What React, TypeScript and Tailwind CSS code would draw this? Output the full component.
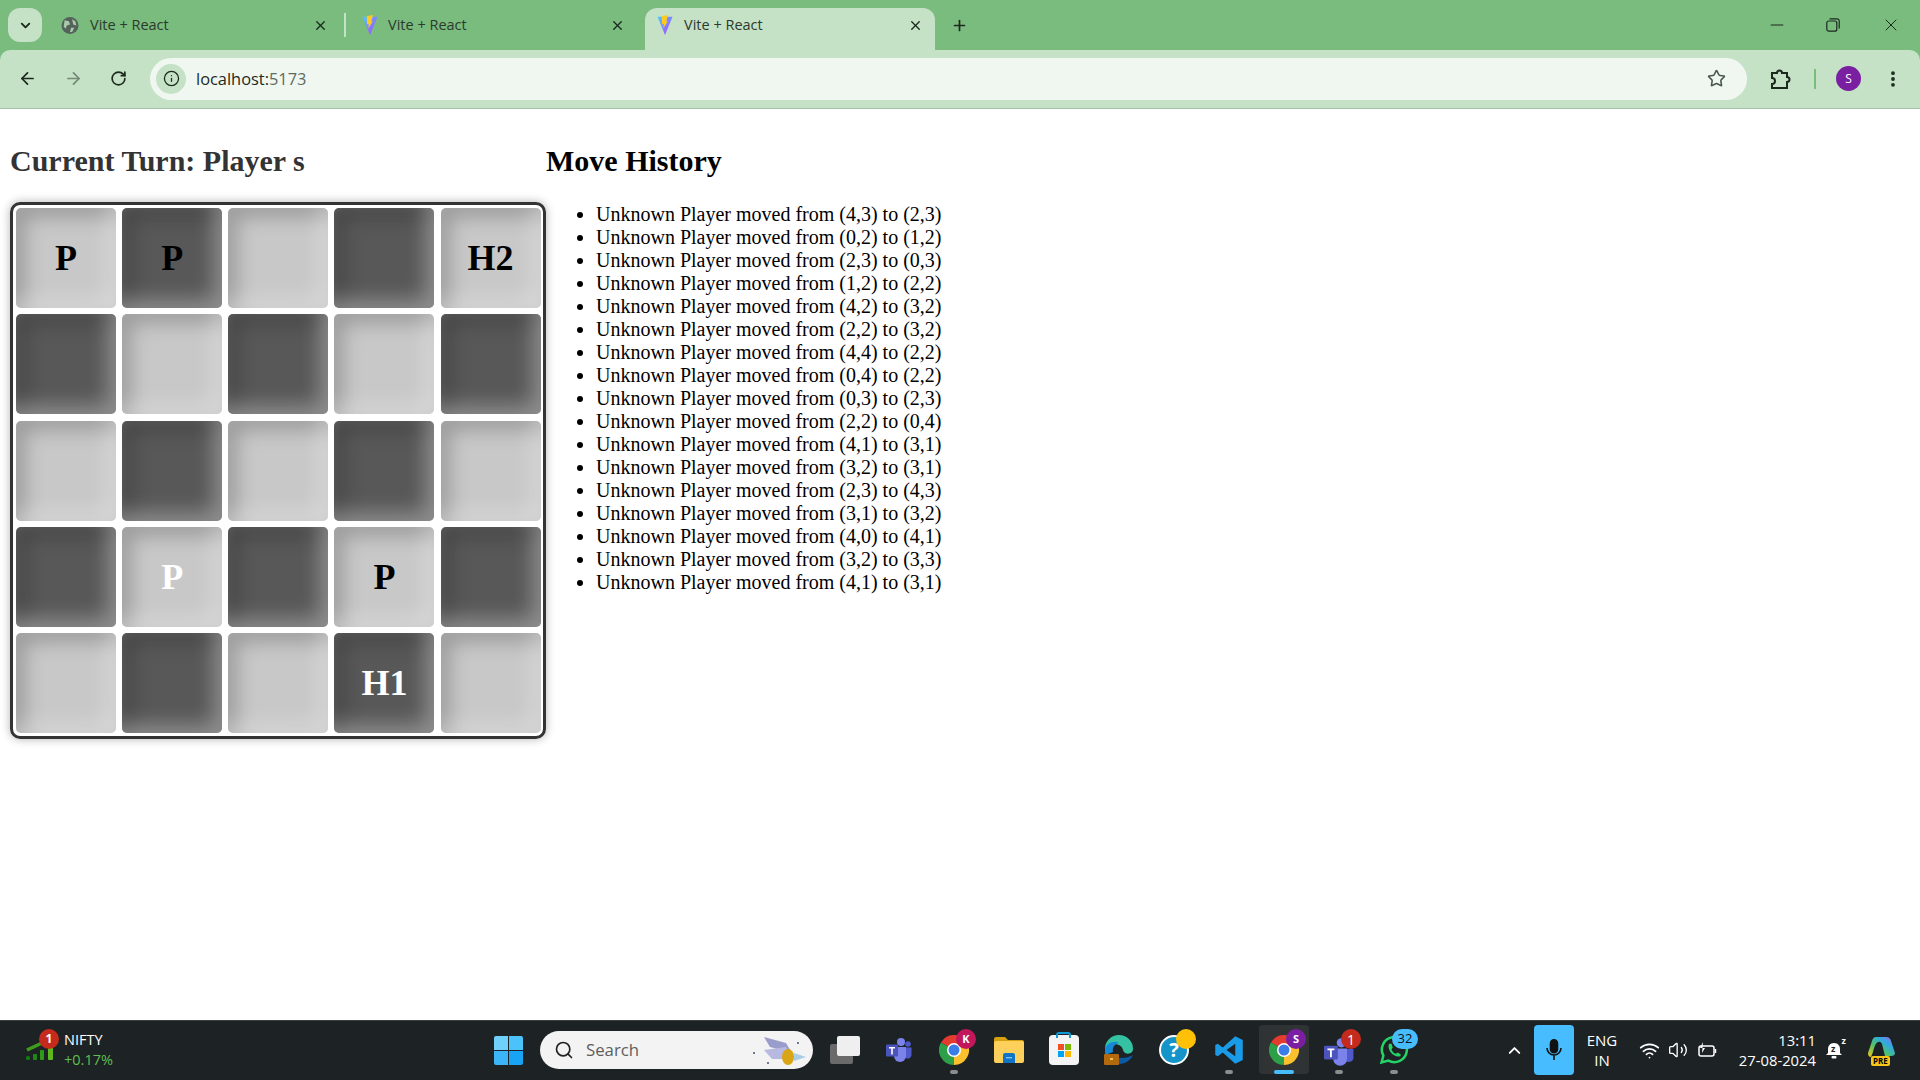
import React from "react";
import {
  ArrowLeft,
  ArrowRight,
  ChevronDown,
  ChevronUp,
  EllipsisVertical,
  Info,
  Minus,
  Plus,
  RotateCw,
  Search,
  Star,
  Volume2,
  Wifi,
  X,
} from "lucide-react";

const board = [
  ["P", "P", "", "", "H2"],
  ["", "", "", "", ""],
  ["", "", "", "", ""],
  ["", "P", "", "P", ""],
  ["", "", "", "H1", ""],
];

const whitePieces = ["3-1", "4-3"];

const moves = [
  "(4,3) to (2,3)",
  "(0,2) to (1,2)",
  "(2,3) to (0,3)",
  "(1,2) to (2,2)",
  "(4,2) to (3,2)",
  "(2,2) to (3,2)",
  "(4,4) to (2,2)",
  "(0,4) to (2,2)",
  "(0,3) to (2,3)",
  "(2,2) to (0,4)",
  "(4,1) to (3,1)",
  "(3,2) to (3,1)",
  "(2,3) to (4,3)",
  "(3,1) to (3,2)",
  "(4,0) to (4,1)",
  "(3,2) to (3,3)",
  "(4,1) to (3,1)",
];

const ViteIcon = ({ id }: { id: string }) => (
  <svg width="20" height="20" viewBox="0 0 24 24" className="shrink-0">
    <defs>
      <linearGradient id={id} x1="0" y1="0" x2="1" y2="1">
        <stop offset="0" stopColor="#41d1ff" />
        <stop offset="1" stopColor="#bd34fe" />
      </linearGradient>
    </defs>
    <path d="M3 2 L21 2 L12 24 Z" fill={`url(#${id})`} />
    <path d="M15.5 0 L8 1.5 L8.5 11 L10.5 10.5 L10 16 L15.5 7.5 L13.5 8 Z" fill="#ffc91f" />
  </svg>
);

const ChromeIcon = () => (
  <svg width="30" height="30" viewBox="0 0 24 24">
    <path d="M12 12 L1.6 6 A12 12 0 0 1 22.4 6 Z" fill="#e33b2e" />
    <path d="M12 12 L1.6 6 A12 12 0 0 0 12 24 Z" fill="#2d9f48" />
    <path d="M12 12 L22.4 6 A12 12 0 0 1 12 24 Z" fill="#fbc02d" />
    <circle cx="12" cy="12" r="5.6" fill="#fff" />
    <circle cx="12" cy="12" r="4.4" fill="#3b7de8" />
  </svg>
);

const TeamsIcon = ({ size = 26 }: { size?: number }) => (
  <svg width={size} height={size} viewBox="0 0 26 24">
    <circle cx="15" cy="4" r="4" fill="#7b83eb" />
    <circle cx="22" cy="6" r="2.8" fill="#5059c9" />
    <path d="M18 9.5 h7.5 v7 a4 4 0 0 1 -7.5 2 Z" fill="#5059c9" />
    <path d="M8 9 h12 v9 a6 6 0 0 1 -12 0 Z" fill="#7b83eb" />
    <rect x="0" y="6.5" width="12" height="12" rx="1" fill="#4b53bc" />
    <path d="M3 9 h6 v1.5 h-2.2 v6 h-1.6 v-6 h-2.2 Z" fill="#fff" />
  </svg>
);

const Badge = ({ label, className }: { label: string; className: string }) => (
  <span
    className={`absolute flex items-center justify-center rounded-full text-white font-['Open_Sans',sans-serif] ${className}`}
  >
    {label}
  </span>
);

const Dot = () => <span className="absolute bottom-[-9px] left-1/2 -translate-x-1/2 w-2 h-[4px] rounded-full bg-[#8b8d8d]" />;

const Tab = ({ icon, gap }: { icon: React.ReactNode; gap: string }) => (
  <div className="flex h-[34px] w-full items-center">
    {icon}
    <span className={`text-[14.5px] text-[#2c3a2d] ${gap}`}>Vite + React</span>
    <X size={15} strokeWidth={2.2} className="ml-auto text-[#1c2a1d]" />
  </div>
);

const Chrome = () => (
  <div className="bg-[#7abb7e] font-['Open_Sans',sans-serif]">
    <div className="flex h-[50px] pt-2">
      <div className="ml-2 flex h-[34px] w-[34px] shrink-0 items-center justify-center rounded-[12px] bg-[#c5e1c6]">
        <ChevronDown size={15} strokeWidth={3} className="text-[#1c2a1d]" />
      </div>
      <div className="ml-[19px] w-[267px] shrink-0">
        <Tab
          gap="ml-[11px]"
          icon={
            <svg width="18" height="17" viewBox="0 0 16 16" className="shrink-0 text-[#54635a]">
              <circle cx="8" cy="8" r="8" fill="currentColor" />
              <path d="M3 3 l4 1 l1 3 l-3 1 l-1 3 l-2 -2 Z M10 2 l3 2 l1 4 l-3 -1 Z M9 10 l3 0 l-2 4 l-2 0 Z" fill="#a9c9ab" />
            </svg>
          }
        />
      </div>
      <div className="ml-[16px] mt-[5px] h-[24px] w-[2px] shrink-0 bg-[#c5e1c6]" />
      <div className="ml-[14px] w-[265px] shrink-0">
        <Tab gap="ml-[8px]" icon={<ViteIcon id="vite-a" />} />
      </div>
      <div className="ml-[20px] h-[42px] w-[290px] shrink-0 rounded-t-[12px] bg-[#c5e1c6] pl-[10px] pr-[12px]">
        <Tab gap="ml-[9px]" icon={<ViteIcon id="vite-b" />} />
      </div>
      <div className="ml-[16px] flex h-[34px] items-center">
        <Plus size={17} strokeWidth={2.4} className="text-[#1c2a1d]" />
      </div>
      <div className="ml-auto flex h-[34px] items-center pr-[19px] text-[#1c2a1d]">
        <Minus size={20} strokeWidth={1.3} />
        <svg width="14" height="14" viewBox="0 0 14 14" fill="none" stroke="currentColor" strokeWidth="1.2" className="ml-[39px]">
          <rect x="0.8" y="3" width="10" height="10.2" rx="2" />
          <path d="M3.5 0.8 h7.5 a2.2 2.2 0 0 1 2.2 2.2 v7.5" />
        </svg>
        <X size={20} strokeWidth={1.2} className="ml-[41px]" />
      </div>
    </div>
    <div className="flex h-[59px] items-center rounded-t-[10px] border-b border-[#a7c3a9] bg-[#c5e1c6] pb-[1px]">
      <div className="flex w-[150px] items-center gap-[27px] pl-[18px]">
        <ArrowLeft size={19} strokeWidth={2.2} className="text-[#1c2a1d]" />
        <ArrowRight size={19} strokeWidth={2.2} className="text-[#738a75]" />
        <RotateCw size={17} strokeWidth={2.4} className="text-[#1c2a1d]" />
      </div>
      <div className="flex h-[42px] w-[1597px] items-center rounded-full bg-[#f0f7f1] pl-[6px] pr-[21px]">
        <div className="flex h-[30px] w-[30px] items-center justify-center rounded-full bg-[#c5e1c6]">
          <Info size={17} strokeWidth={1.8} className="text-[#1c2a1d]" />
        </div>
        <span className="ml-[10px] mt-[2px] text-[16.4px] text-[#1c2a1d]">
          localhost:<span className="text-[#5c6a5d]">5173</span>
        </span>
        <Star size={19} strokeWidth={2} className="ml-auto text-[#4b574c]" />
      </div>
      <svg width="22" height="22" viewBox="0 0 22 22" fill="none" stroke="#1c2a1d" strokeWidth="2" className="ml-[23px]">
        <path d="M2 5 h5 a2.5 2.5 0 0 1 5 0 h5 v4 a2.5 2.5 0 0 1 0 5 v6 H2 v-4 a3 3 0 0 0 0 -6 Z" />
      </svg>
      <div className="ml-[22px] h-[20px] w-[2px] bg-[#7abb7e]" />
      <div className="ml-[20px] flex h-[25px] w-[25px] items-center justify-center rounded-full bg-[#7b1fa2] text-[12px] text-white">
        S
      </div>
      <EllipsisVertical size={20} strokeWidth={2.6} className="ml-[22px] text-[#1c2a1d]" />
    </div>
  </div>
);

const Board = () => (
  <div className="grid w-[536px] grid-cols-[repeat(5,100px)] gap-x-[6.15px] gap-y-[6.25px] rounded-[10px] border-[3px] border-[#333] py-[3px] pl-[3px] pr-[2px] shadow-[0_0_10px_rgba(0,0,0,0.3)]">
    {board.map((row, r) =>
      row.map((piece, c) => {
        const dark = (r + c) % 2 === 1;
        const white = whitePieces.includes(`${r}-${c}`);
        return (
          <div
            key={`${r}-${c}`}
            className={`flex h-[100px] w-[100px] items-center justify-center rounded-[5px] text-[36px] font-bold shadow-[inset_-8px_-8px_20px_rgba(255,255,255,0.35),inset_8px_8px_20px_rgba(0,0,0,0.25)] ${
              dark ? "bg-[#585858]" : "bg-[#c8c8c8]"
            } ${white ? "text-white" : "text-black"}`}
          >
            {piece}
          </div>
        );
      }),
    )}
  </div>
);

const Taskbar = () => (
  <div className="flex h-[60px] items-center border-t border-[#3a3d3d] bg-[#1d2224] pb-[1px] font-['Open_Sans',sans-serif] text-white">
    <div className="relative flex h-full w-[476px] shrink-0 items-center pl-[64px]">
      <svg width="30" height="24" viewBox="0 0 30 24" className="absolute left-[25px] top-[16px]">
        <path d="M2 13 L17 6" stroke="#3f9d1e" strokeWidth="3.5" fill="none" />
        <rect x="1" y="19" width="4" height="4" rx="1.5" fill="#107c10" />
        <rect x="8" y="17" width="4" height="6" rx="1" fill="#1c8a14" />
        <rect x="15" y="13" width="4" height="10" rx="1" fill="#2d9a18" />
        <rect x="23" y="7" width="5" height="16" rx="1" fill="#5cb81e" />
      </svg>
      <Badge label="1" className="left-[39px] top-[8px] h-[20px] w-[20px] bg-[#c42b1c] text-[12px] font-bold" />
      <div className="text-[14.5px] leading-[20px]">
        <div>NIFTY</div>
        <div className="text-[#5fbf4f]">+0.17%</div>
      </div>
    </div>
    <div className="flex w-[64px] shrink-0 justify-center">
      <div className="grid h-[29px] w-[29px] grid-cols-2 gap-[1px]">
        <span className="rounded-tl-[2px] bg-[#6fd1fb]" />
        <span className="rounded-tr-[2px] bg-[#4cc2fa]" />
        <span className="rounded-bl-[2px] bg-[#3bb4f8]" />
        <span className="rounded-br-[2px] bg-[#19a3f5]" />
      </div>
    </div>
    <div className="relative flex h-[38px] w-[273px] shrink-0 items-center rounded-full bg-[#f3f3f3] pl-[14px] text-[#5e5e5e]">
      <Search size={20} strokeWidth={2} className="text-[#222]" />
      <span className="ml-[12px] text-[16.8px]">Search</span>
      <svg width="56" height="34" viewBox="0 0 56 34" className="absolute right-[5px] top-[2px]">
        <path d="M12 4 L34 10 L40 20 L18 14 Z" fill="#9a9ccc" />
        <path d="M12 17 L34 14 L42 26 L20 26 Z" fill="#b7b9e0" />
        <ellipse cx="36" cy="24" rx="6" ry="8" fill="#d9a514" />
        <path d="M42 20 L54 24 L42 28 Z" fill="#a9cde6" />
        <circle cx="2" cy="20" r="1" fill="#44506a" />
        <circle cx="46" cy="10" r="1" fill="#44506a" />
        <circle cx="16" cy="30" r="1" fill="#44506a" />
      </svg>
    </div>
    <div className="ml-[17px] flex items-center gap-[25px]">
      <div className="relative h-[28px] w-[30px]">
        <span className="absolute bottom-0 left-0 h-[20px] w-[23px] rounded-[2px] bg-[#6a6a6a]" />
        <span className="absolute right-0 top-0 h-[20px] w-[23px] rounded-[2px] bg-[#efefef]" />
      </div>
      <div className="relative ml-[1px]">
        <TeamsIcon />
      </div>
      <div className="relative ml-[2px] h-[30px] w-[30px]">
        <ChromeIcon />
        <Badge label="K" className="right-[-7px] top-[-6px] h-[20px] w-[20px] bg-[#c2185b] text-[11px] font-bold" />
        <Dot />
      </div>
      <svg width="30" height="28" viewBox="0 0 30 28">
        <path d="M0 3 a2 2 0 0 1 2 -2 h9 l3 3 h14 a2 2 0 0 1 2 2 v4 H0 Z" fill="#d6a10f" />
        <rect x="0" y="5" width="30" height="22" rx="2" fill="#fcd05a" />
        <path d="M9 19 a2 2 0 0 1 2 -2 h8 a2 2 0 0 1 2 2 v8 H9 Z" fill="#0f74c8" />
        <rect x="12" y="21" width="6" height="1.4" fill="#7cc4f5" />
      </svg>
      <div className="relative flex h-[30px] w-[30px] items-center justify-center rounded-[4px] bg-[#f4f4f4]">
        <span className="absolute left-[7px] top-[-3px] h-[6px] w-[15px] rounded-t-[3px] border-2 border-b-0 border-[#0f9bd7]" />
        <div className="grid h-[13px] w-[13px] grid-cols-2 gap-[1px]">
          <span className="bg-[#f25022]" />
          <span className="bg-[#7fba00]" />
          <span className="bg-[#00a4ef]" />
          <span className="bg-[#ffb900]" />
        </div>
      </div>
      <svg width="30" height="30" viewBox="0 0 30 30">
        <path d="M1 14 A14 14 0 0 1 29 14 C29 20 20 20 19 15 C18 10 12 8 8 10 C4 12 3 14 1 17 Z" fill="#35c2a3" />
        <path d="M1 14 C3 8 10 5 15 8 C10 9 8 13 9 17 L1 20 Z" fill="#1787d8" />
        <path d="M10 20 C14 24 22 24 29 20 C26 27 18 30 12 29 Z" fill="#0c59a4" />
        <rect x="0" y="19" width="15" height="11" rx="1" fill="#b4690e" />
        <rect x="6" y="23" width="3" height="2" fill="#f3c24a" />
      </svg>
      <div className="relative h-[30px] w-[30px]">
        <div className="flex h-[30px] w-[30px] items-center justify-center rounded-full border-2 border-white bg-[#1594c9] text-[20px] font-bold">?</div>
        <span className="absolute right-[-7px] top-[-6px] h-[20px] w-[20px] rounded-full bg-[#ffc107]" />
      </div>
      <div className="relative">
        <svg width="30" height="30" viewBox="0 0 24 24" className="block">
          <path d="M17 1 L23 4 V20 L17 23 L7 14 L3 17 L1 16 V8 L3 7 L7 10 Z M17 7 L10 12 L17 17 Z" fill="#1a9be8" fillRule="evenodd" />
        </svg>
        <Dot />
      </div>
      <div className="relative">
        <div className="absolute left-[-10px] top-[-10px] h-[49px] w-[50px] rounded-[4px] bg-[#2f3334]" />
        <div className="relative h-[30px] w-[30px]">
          <ChromeIcon />
          <Badge label="S" className="right-[-7px] top-[-6px] h-[20px] w-[20px] bg-[#7b1fa2] text-[11px] font-bold" />
        </div>
        <span className="absolute bottom-[-9px] left-1/2 h-[4px] w-[20px] -translate-x-1/2 rounded-full bg-[#47bdff]" />
      </div>
      <div className="relative h-[30px] w-[30px] pt-[2px]">
        <TeamsIcon size={30} />
        <Badge label="1" className="right-[-7px] top-[-6px] h-[20px] w-[20px] bg-[#c42b1c] text-[14px]" />
        <Dot />
      </div>
      <div className="relative h-[30px] w-[30px]">
        <svg width="30" height="30" viewBox="0 0 24 24" fill="none">
          <path d="M2 22 L3.5 16.5 A10 10 0 1 1 7.5 20.5 Z" stroke="#25d366" strokeWidth="2" />
          <path d="M8 7 L10 7 L11 10 L10 11.5 C11 13.5 12 14.5 13.5 15 L15 14 L17.5 15.5 L17 17 C12 18.5 6 12 8 7 Z" fill="#25d366" />
        </svg>
        <Badge label="32" className="right-[-9px] top-[-6px] h-[20px] w-[26px] bg-[#47bdff] text-[13px] !text-[#111]" />
        <Dot />
      </div>
    </div>
    <div className="ml-auto flex h-full items-center pr-[24px]">
      <ChevronUp size={19} strokeWidth={2.4} />
      <div className="ml-[10px] flex h-[50px] w-[40px] items-center justify-center rounded-[4px] bg-[#47bdff]">
        <svg width="18" height="22" viewBox="0 0 18 22" fill="none" stroke="#111" strokeWidth="1.6">
          <rect x="5.5" y="0.8" width="7" height="13" rx="3.5" fill="#111" />
          <path d="M2 9 a7 7 0 0 0 14 0 M9 16 v5" />
        </svg>
      </div>
      <div className="ml-[10px] w-[36px] text-center text-[15px] leading-[20px]">
        ENG
        <br />
        IN
      </div>
      <Wifi size={21} strokeWidth={2} className="ml-[19px]" />
      <Volume2 size={20} strokeWidth={1.6} className="ml-[8px]" />
      <svg width="20" height="18" viewBox="0 0 20 18" fill="none" stroke="#fff" strokeWidth="1.5" className="ml-[10px]">
        <rect x="1" y="5" width="15" height="10" rx="2" />
        <path d="M17.5 8 v4" />
        <path d="M5 1 L2 7 H7 L4 12" fill="#fff" stroke="none" />
      </svg>
      <div className="ml-[6px] w-[92px] text-right text-[14.8px] leading-[20px]">
        <div>13:11</div>
        <div className="whitespace-nowrap">27-08-2024</div>
      </div>
      <div className="relative ml-[9px] h-[20px] w-[18px]">
        <svg width="18" height="20" viewBox="0 0 18 20">
          <path d="M9 3 C5 3 3 6 3 9 V13 L1 15 H17 L15 13 V9 C15 6 13 3 9 3 Z" fill="#fff" />
          <rect x="6.5" y="16" width="5" height="2.5" rx="1" fill="#fff" />
        </svg>
        <span className="absolute left-[6px] top-[4px] text-[9px] font-bold leading-[10px] text-[#1d2224]">z</span>
        <span className="absolute right-[-3px] top-[-4px] text-[9px] font-bold leading-[10px]">z</span>
      </div>
      <div className="relative ml-[24px] h-[29px] w-[29px]">
        <svg width="29" height="24" viewBox="0 0 29 24">
          <defs>
            <linearGradient id="copilot" x1="0" y1="1" x2="1" y2="0">
              <stop offset="0" stopColor="#f5c518" />
              <stop offset="0.4" stopColor="#4fc36a" />
              <stop offset="0.7" stopColor="#2fa8e8" />
              <stop offset="1" stopColor="#c25adf" />
            </linearGradient>
          </defs>
          <path d="M9 1 H19 Q23 1 24 5 L28 17 Q28 20 24 20 H18 L15 8 Q14 5 11 6 Q8 7 6 16 L4 21 Q1 21 1 17 L5 5 Q6 1 9 1 Z" fill="url(#copilot)" />
        </svg>
        <span className="absolute bottom-[-1px] left-[4px] rounded-[2px] bg-[#f5c518] px-[2px] text-[8px] font-bold leading-[10px] text-black">PRE</span>
      </div>
    </div>
  </div>
);

const App = () => {
  return (
    <div className="flex h-screen flex-col overflow-hidden bg-white font-['Liberation_Serif',serif]">
      <Chrome />
      <div className="flex flex-1 px-[10px]">
        <div className="w-[536px] shrink-0">
          <h2 className="mb-[25px] mt-[35px] text-[30px] font-bold leading-[33px] text-[#333]">
            Current Turn: Player s
          </h2>
          <Board />
        </div>
        <div>
          <h2 className="mb-[26px] mt-[35px] text-[30px] font-bold leading-[33px] text-black">Move History</h2>
          <ul className="list-disc pl-[50px] text-[20px] leading-[23px] text-black">
            {moves.map((move, i) => (
              <li key={i}>Unknown Player moved from {move}</li>
            ))}
          </ul>
        </div>
      </div>
      <Taskbar />
    </div>
  );
};

export default App;
